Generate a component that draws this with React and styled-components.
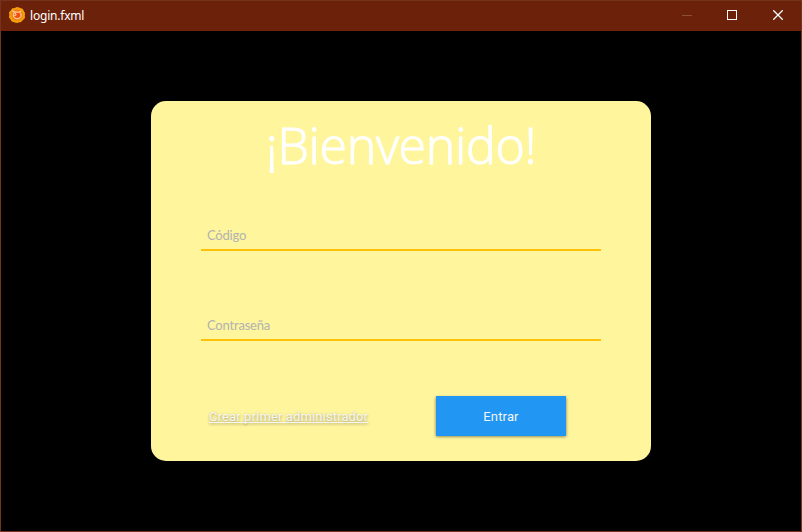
import React from "react";
import styled, { createGlobalStyle } from "styled-components";

const GlobalStyle = createGlobalStyle`
  html, body { margin: 0; padding: 0; overflow: hidden; }
  * { box-sizing: border-box; }
`;

const Window = styled.div`
  width: 802px;
  height: 532px;
  display: flex;
  flex-direction: column;
  border: 1px solid #75331d;
  background: #000;
`;

const TitleBar = styled.header`
  height: 30px;
  flex: none;
  display: flex;
  align-items: center;
  background: #6b210a;
  padding-left: 8px;
`;

const AppIconSvg = styled.svg`
  flex: none;
  margin-top: -2px;
`;

const WindowTitle = styled.span`
  flex: 1;
  margin-left: 5px;
  color: #fff;
  font: 400 12px/16px "Noto Sans", "Open Sans", sans-serif;
  letter-spacing: -0.2px;
`;

const Controls = styled.div`
  display: flex;
  height: 100%;
`;

const ControlButton = styled.button`
  width: 46px;
  height: 28px;
  padding: 0;
  border: 0;
  background: transparent;
  color: ${(p) => (p.disabled ? "#8c4f3d" : "#fff")};
  display: flex;
  align-items: center;
  justify-content: center;
`;

const Content = styled.main`
  flex: 1;
  display: flex;
  justify-content: center;
  align-items: flex-start;
  padding-top: 70px;
`;

const Card = styled.form`
  width: 500px;
  height: 360px;
  padding: 0 50px;
  border-radius: 15px;
  background: #fff59d;
  display: flex;
  flex-direction: column;
`;

const Heading = styled.h1`
  margin: 10px 0 0;
  height: 70px;
  text-align: center;
  white-space: nowrap;
  color: #fff;
  font: 300 50px/68px "Open Sans", "Noto Sans", sans-serif;
  letter-spacing: -0.3px;
  -webkit-text-stroke: 1px #fff;
`;

const Field = styled.input`
  width: 400px;
  height: 30px;
  margin-top: ${(p) => p.$gap}px;
  padding: 0 6px;
  border: 0;
  border-bottom: 2px solid #ffc107;
  border-radius: 0;
  outline: 0;
  background: transparent;
  font: 400 13px/18px Lato, sans-serif;
  letter-spacing: -0.2px;
  &::placeholder { color: #b2b2b2; opacity: 1; }
`;

const Actions = styled.div`
  margin-top: 55px;
  padding: 0 35px 0 8px;
  display: flex;
  align-items: center;
  justify-content: space-between;
`;

const CreateLink = styled.a`
  padding-top: 2px;
  color: #f5f5f5;
  font: 400 13px/16px Roboto, sans-serif;
  letter-spacing: 0.13px;
  text-decoration: underline;
  text-decoration-thickness: 1px;
  text-underline-offset: 1px;
  text-decoration-skip-ink: none;
  text-shadow: 0 1px 3px rgba(0, 0, 0, 0.38);
`;

const SubmitButton = styled.button`
  width: 130px;
  height: 40px;
  padding: 2px 0 0;
  border: 0;
  background: #2196f3;
  color: #f5f5f5;
  font: 400 13px/16px Roboto, sans-serif;
  letter-spacing: 0.15px;
  box-shadow: 0 0.5px 3px rgba(0, 0, 0, 0.55);
`;

const AppIcon = () => (
  <AppIconSvg width="16" height="16" viewBox="0 0 16 16">
    <path d="M8 0 10.8.7 13.8 2 14.8 4 16 6 15.8 8.5 16 11 14 13 12 15 9.5 15.4 8 16 5.8 15.4 2.8 14.6 1.6 12.6 0 10.5.3 8 0 5.3 1.8 3.6 3 1.5 5.6.9Z" fill="#f5a00b" />
    <circle cx="8" cy="8" r="5.8" fill="#f67d14" />
    <circle cx="8.4" cy="8" r="2.6" fill="#f04b12" />
    <path d="M3 3.7 5.8 5M5.6 5C4.2 6.5 3.8 8.7 5 10.3 6.3 12 9 12.3 10.8 11 12.6 9.5 12.5 7 11 5.4M5.6 5 9.5 5.3 12.3 4.3M5.3 5 7.3 8 5.4 8.6" fill="none" stroke="#ffdcb8" strokeWidth="1" />
  </AppIconSvg>
);

export default function App() {
  return (
    <>
      <GlobalStyle />
      <Window>
        <TitleBar>
          <AppIcon />
          <WindowTitle>login.fxml</WindowTitle>
          <Controls>
            <ControlButton type="button" disabled aria-label="Minimizar">
              <svg width="12" height="10" shapeRendering="crispEdges"><path d="M2 5h10v1H2z" fill="currentColor" /></svg>
            </ControlButton>
            <ControlButton type="button" aria-label="Maximizar">
              <svg width="10" height="10"><rect x=".5" y=".5" width="9" height="9" fill="none" stroke="currentColor" /></svg>
            </ControlButton>
            <ControlButton type="button" aria-label="Cerrar">
              <svg width="10" height="10"><path d="M.3.3 9.7 9.7M9.7.3.3 9.7" fill="none" stroke="currentColor" strokeWidth="1.3" /></svg>
            </ControlButton>
          </Controls>
        </TitleBar>
        <Content>
          <Card>
            <Heading>¡Bienvenido!</Heading>
            <Field $gap={40} placeholder="Código" />
            <Field $gap={60} type="password" placeholder="Contraseña" />
            <Actions>
              <CreateLink>Crear primer administrador</CreateLink>
              <SubmitButton type="button">Entrar</SubmitButton>
            </Actions>
          </Card>
        </Content>
      </Window>
    </>
  );
}
